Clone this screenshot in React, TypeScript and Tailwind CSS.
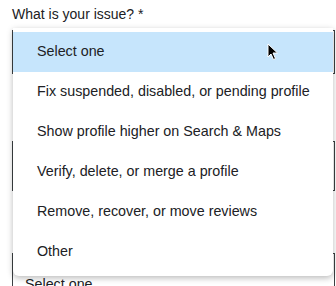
const options = [
  "Select one",
  "Fix suspended, disabled, or pending profile",
  "Show profile higher on Search & Maps",
  "Verify, delete, or merge a profile",
  "Remove, recover, or move reviews",
  "Other",
];

function Pointer() {
  return (
    <svg width="12" height="18" viewBox="0 0 12 18" className="absolute left-[267px] top-[43px]">
      <path
        d="M1 1 L1 14 L4 11 L6.5 16.5 L8.5 15.5 L6 10 L10.5 10 Z"
        fill="#000"
        stroke="#fff"
        strokeWidth="1"
        strokeLinejoin="round"
      />
    </svg>
  );
}

export default function App() {
  return (
    <div className="relative w-[336px] h-[286px] overflow-hidden bg-white font-['Liberation_Sans',Arial,sans-serif] text-[#202124]">
      {/* form underneath */}
      <div className="pl-3 pt-[5px]">
        <p className="text-[14px] leading-[18px] text-[#202124]">What is your issue? *</p>
        <div className="mt-[7px] h-[44px] w-[323px] border border-[#3c4043]" />
        <div className="mt-[67px] h-[50px] w-[323px] border border-[#3c4043]" />
        <div className="mt-[62px] h-[44px] w-[323px] border border-[#3c4043] pl-3 pt-[20px] text-[14.3px]">
          Select one
        </div>
      </div>

      {/* open dropdown */}
      <div className="absolute left-[13px] top-[28px] w-[320px] pt-1 pb-1 bg-white rounded-b-[6px] shadow-[0_2px_6px_rgba(0,0,0,0.28)]">
        {options.map((o, i) => (
          <div
            key={o}
            className={`h-10 flex items-center pl-6 text-[14.3px] ${i === 0 ? "bg-[#c6e5fc]" : ""}`}
          >
            {o}
          </div>
        ))}
      </div>
      <Pointer />
    </div>
  );
}
